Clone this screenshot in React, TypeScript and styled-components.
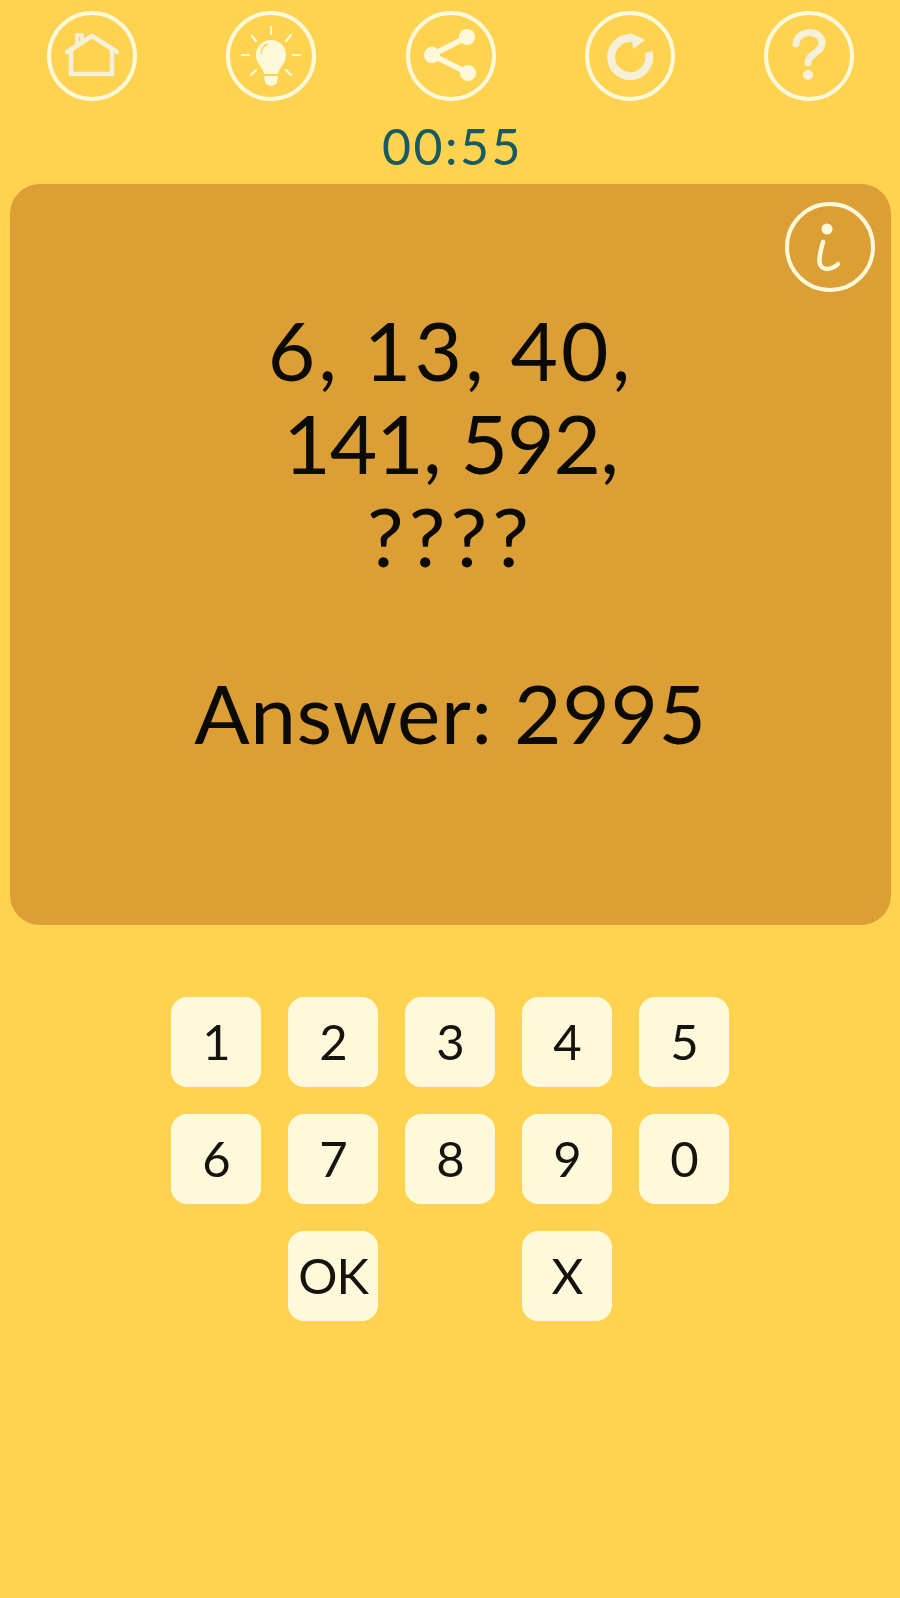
import styled, { createGlobalStyle } from 'styled-components';

const cream = '#fff9dc';
const pale = '#f5f0da';

const GlobalStyle = createGlobalStyle`
  html, body {
    margin: 0;
    padding: 0;
    background: #ffd24f;
  }
  body {
    font-family: "Lato", "Liberation Sans", sans-serif;
  }
`;

const Page = styled.div`
  width: 900px;
  height: 1598px;
  overflow: hidden;
  background: #ffd24f;
`;

const Toolbar = styled.div`
  display: flex;
  justify-content: space-between;
  padding: 11px 46px 0 47px;
`;

const RoundButton = styled.button`
  width: 90px;
  height: 90px;
  padding: 0;
  box-sizing: border-box;
  border: 4px solid ${cream};
  border-radius: 50%;
  background: none;
  display: block;

  svg {
    display: block;
    margin: -4px;
    width: 90px;
    height: 90px;
  }
`;

const InfoButton = styled(RoundButton)`
  position: absolute;
  top: 18px;
  right: 16px;
`;

const Timer = styled.div`
  margin-top: 15px;
  height: 68px;
  padding-left: 5px;
  text-align: center;
  font-size: 50px;
  line-height: 60px;
  letter-spacing: 2.5px;
  color: #175a62;
`;

const Card = styled.div`
  position: relative;
  height: 741px;
  margin: 0 9px 0 10px;
  padding-top: 119px;
  box-sizing: border-box;
  border-radius: 30px;
  background: #db9f35;
  text-align: center;
  color: #0c0a05;
`;

const QuestionLine = styled.div<{ $spacing: number }>`
  font-size: 82px;
  line-height: 93px;
  letter-spacing: ${({ $spacing }) => $spacing}px;
`;

const Answer = styled.div`
  margin-top: 84px;
  font-size: 82px;
  line-height: 93px;
  letter-spacing: 0.6px;
`;

const Keypad = styled.div`
  display: grid;
  grid-template-columns: repeat(5, 90px);
  grid-auto-rows: 90px;
  gap: 27px;
  justify-content: center;
  margin-top: 72px;
`;

const Key = styled.div<{ $col?: number }>`
  display: flex;
  align-items: center;
  justify-content: center;
  padding-bottom: 3px;
  box-sizing: border-box;
  grid-column: ${({ $col }) => $col ?? 'auto'};
  border-radius: 16px;
  background: ${cream};
  font-size: 49px;
  letter-spacing: -1px;
  color: #15130c;
`;

const HomeIcon = () => (
  <svg viewBox="0 0 90 90" fill="none" stroke={pale} strokeWidth="4.5">
    <path d="M20 41 L45 25 L70 41" strokeLinecap="round" />
    <path d="M24 38 V63 H65 V38" />
    <path d="M30 34 V24 H35 V30" strokeWidth="3.5" />
  </svg>
);

const BulbIcon = () => (
  <svg viewBox="0 0 90 90">
    <path
      d="M45 29 C36 29 30 36 30 44 C30 52 36 55 38 63 H52 C54 55 60 52 60 44 C60 36 54 29 45 29 Z"
      fill={cream}
    />
    <path d="M38 65 H52 L51 71 C49 76 41 76 39 71 Z" fill={cream} />
    <path d="M35 43 C35 38 38 34 42 33" fill="none" stroke="#ffd24f" strokeWidth="1.5" />
    <g stroke={cream} strokeWidth="2.2" strokeLinecap="round">
      <path d="M45 16 V23" />
      <path d="M16 44 H23" />
      <path d="M67 44 H74" />
      <path d="M26 25 L30 30" />
      <path d="M65 24 L60 30" />
      <path d="M25 64 L30 59" />
      <path d="M65 64 L60 59" />
    </g>
  </svg>
);

const ShareIcon = () => (
  <svg viewBox="0 0 90 90" fill={cream}>
    <path d="M61 26 L26 44 L62 62" fill="none" stroke={cream} strokeWidth="5.5" />
    <circle cx="61" cy="26" r="8" />
    <circle cx="26" cy="44" r="8" />
    <circle cx="62" cy="62" r="8" />
  </svg>
);

const ReloadIcon = () => (
  <svg viewBox="0 0 90 90" fill="none">
    <path d="M63.5 41 A19 19 0 1 1 47 27.2" stroke={pale} strokeWidth="8" />
    <path d="M46 22 L60 29 L48 38 Z" fill={pale} />
  </svg>
);

const HelpIcon = () => (
  <svg viewBox="0 0 90 90" fill="none">
    <path
      d="M32 33 C33 18 58 18 58 32 C58 42 44 42 44 52"
      stroke={pale}
      strokeWidth="7"
      strokeLinecap="round"
    />
    <circle cx="44" cy="64" r="5" fill={pale} />
  </svg>
);

const InfoIcon = () => (
  <svg viewBox="0 0 90 90" fill="none">
    <circle cx="42" cy="27" r="5.5" fill={cream} />
    <path
      d="M38 40 C36 48 33 56 35 62 C37 69 47 68 53 62"
      stroke={cream}
      strokeWidth="4.5"
      strokeLinecap="round"
    />
  </svg>
);

const keys = ['1', '2', '3', '4', '5', '6', '7', '8', '9', '0'];

export default function App() {
  return (
    <Page>
      <GlobalStyle />
      <Toolbar>
        <RoundButton aria-label="Home"><HomeIcon /></RoundButton>
        <RoundButton aria-label="Hint"><BulbIcon /></RoundButton>
        <RoundButton aria-label="Share"><ShareIcon /></RoundButton>
        <RoundButton aria-label="Restart"><ReloadIcon /></RoundButton>
        <RoundButton aria-label="Help"><HelpIcon /></RoundButton>
      </Toolbar>
      <Timer>00:55</Timer>
      <Card>
        <InfoButton aria-label="Info"><InfoIcon /></InfoButton>
        <QuestionLine $spacing={3}>6, 13, 40,</QuestionLine>
        <QuestionLine $spacing={-1}>141, 592,</QuestionLine>
        <QuestionLine $spacing={5}>????</QuestionLine>
        <Answer>Answer: 2995</Answer>
      </Card>
      <Keypad>
        {keys.map((k) => (
          <Key key={k}>{k}</Key>
        ))}
        <Key $col={2}>OK</Key>
        <Key $col={4}>X</Key>
      </Keypad>
    </Page>
  );
}
